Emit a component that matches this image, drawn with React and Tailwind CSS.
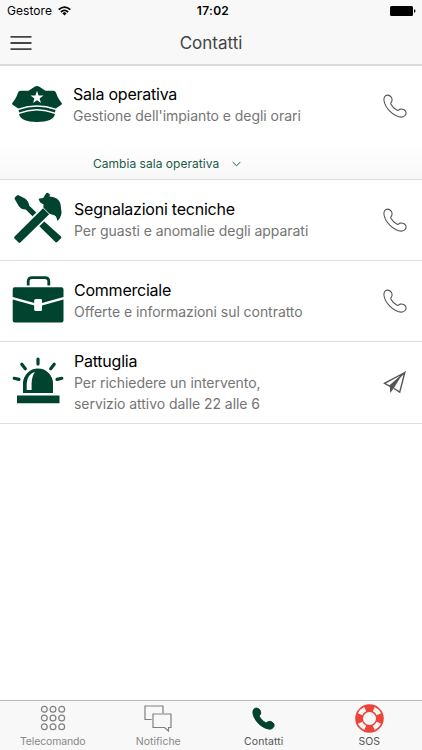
import React from 'react';

const GREEN = '#00432f';

function HatIcon() {
  return (
    <svg width="50" height="36" viewBox="0 0 50 36" fill={GREEN}>
      <path d="M22.600 .7Q25-.6 27.400 .7L33.500 4.700H41.500Q43.200 4.700 43.800 6.200L45.500 10.600Q46.300 12.800 49.300 16.600Q50.600 18 49 19L43.800 22.400Q25 16 6.200 22.400L1 19Q-.6 18 .7 16.600Q3.700 12.800 4.500 10.600L6.200 6.200Q6.800 4.700 8.500 4.700H16.500Z" />
      <path d="M6.600 24Q25 17.400 43.400 24L43 26.400Q25 19.400 7 26.400Z" />
      <path d="M7 28.100Q25 21 43 28.100Q41.500 36 25 36Q8.500 36 7 28.100Z" />
      <path fill="#fff" d="M25 4.800l1.600 4.700h4.900l-3.900 2.900 1.400 4.700-4-2.900-4 2.900 1.400-4.700-3.900-2.900h4.900z" />
    </svg>
  );
}

function ToolsIcon() {
  return (
    <svg width="50" height="52" viewBox="0 0 50 52" fill={GREEN}>
      <path d="M2.400 6.500Q3.500 4 6 3.100L13 6.500Q16.800 9.500 17.100 13.500L24.300 20.600L20.500 24.300L13.800 17.500Q9.500 17.800 6.700 14Z" />
      <path d="M32.300 29.500L49 44.600Q49.800 45.400 49 46.200L45.200 50Q44.300 50.900 43.400 50L27.300 34.300Z" />
      <path d="M31.100 16.300L2.600 44.600Q1.700 45.500 2.500 46.400L6.600 50.500Q7.500 51.300 8.400 50.400L37.200 22.300Z" />
      <path d="M26.700 7.400Q26.700 6.300 28 6.400L31.200 6L34 1.400Q35 .2 36.200 1.100L37.900 2.400L37.500 4.400Q42.500 4.500 45 6.700Q48.600 9.800 48.700 13.500L49.600 20.700Q48.600 26.500 45.300 28.900Q44.800 24.500 42.300 23.200L37.500 21.700L31.300 15.500L31.600 12.400L28.300 10.600Z" />
    </svg>
  );
}

function BriefcaseIcon() {
  return (
    <svg width="52" height="47" viewBox="0 0 52 47" fill={GREEN}>
      <path d="M16.200 9.500V5.600Q16.200 1.600 20.200 1.600H32.800Q36.800 1.600 36.800 5.600V9.500" fill="none" stroke={GREEN} strokeWidth="2.800" />
      <path d="M2.500 11.300H49.500Q51.500 11.300 51.500 13.300V21.100L30 27V24.700Q30 23.300 28.600 23.300H23.800Q22.400 23.300 22.400 24.700V27L.7 21.100V13.300Q.7 11.300 2.500 11.300Z" />
      <path d="M.7 23.600L22.400 29.500V33.500Q22.400 34.900 23.800 34.900H28.600Q30 34.900 30 33.500V29.500L51.500 23.600V44.500Q51.500 46.500 49.500 46.500H2.700Q.7 46.500 .7 44.500Z" />
      <rect x="22.400" y="23.300" width="7.600" height="11.600" rx="1.400" fill="#fff" />
    </svg>
  );
}

function SirenIcon() {
  return (
    <svg width="52" height="47" viewBox="0 0 52 47" fill={GREEN}>
      <path d="M26 2v5M9.800 7.300l3.500 4.400M42.200 7.300l-3.500 4.400M2.200 21.300l4.800 1.100M49.800 21.300L45 22.400" stroke={GREEN} strokeWidth="3.200" strokeLinecap="round" />
      <path d="M11 36V26.500A15 15 0 0 1 41 26.500V36Z" />
      <path d="M14.700 33V26.500Q15 17.500 23 14.700Q20 19 19.600 26V33Z" fill="#fff" />
      <path d="M5 38.500H47.500V46.300H5Z" />
    </svg>
  );
}

const HANDSET =
  'M4.600 1.100C2.200 1 .6 3.300 1 6.500C1.800 13.600 10.500 22.700 18.400 23.100C21.400 23.200 23.700 20.500 22.900 17.900C22.100 16 19.500 14.600 17.300 15.100C16.200 15.400 15.300 16.700 14.100 16.300C11.600 15 9 12.300 7.800 10C7.400 8.800 8.900 8.200 9.100 6.300C9.200 4 7.600 1.200 4.600 1.100Z';

function CallIcon() {
  return (
    <svg width="24" height="24" viewBox="0 0 24 24" fill="none" stroke="#555" strokeWidth="1.100">
      <path d={HANDSET} />
    </svg>
  );
}

function SendIcon() {
  return (
    <svg width="24" height="24" viewBox="0 0 24 24" fill="none" stroke="#555" strokeWidth="1.400">
      <path d="M21.800 1.500L1.500 12.300L6.700 15.200L21.800 1.500L16.700 21.200L11 17.500" />
      <path d="M6.700 14.200L18.500 4.500L11 17L7.300 22Z" fill="#555" stroke="none" />
    </svg>
  );
}

function StatusBar() {
  return (
    <div className="relative flex h-[21px] items-center justify-between pl-[7px] pr-[6px] text-[12px] text-black">
      <div className="flex items-center gap-[6px]">
        <span className="tracking-[0.05px]">Gestore</span>
        <svg width="13" height="10" viewBox="0 0 13 10" fill="none" stroke="#000" strokeWidth="1.700">
          <path d="M.7 3.700Q6.500-1.500 12.300 3.700M2.900 6Q6.500 2.700 10.100 6" />
          <path d="M4.300 7.300Q6.500 5.400 8.700 7.300L6.500 9.600Z" fill="#000" stroke="none" />
        </svg>
      </div>
      <span className="absolute inset-x-0 pl-[4px] text-center font-semibold tracking-[0.3px]">17:02</span>
      <svg width="26" height="10" viewBox="0 0 26 10">
        <rect width="23" height="10" rx="1.500" />
        <path d="M24 3.300Q25.500 3.500 25.500 5T24 6.700Z" />
      </svg>
    </div>
  );
}

function ContactRow({ icon, title, lines, action, className }) {
  return (
    <div className={`flex items-center pl-[12px] pr-[15px] ${className}`}>
      <div className="flex shrink-0 items-center pb-[4px]">{icon}</div>
      <div className="flex-1 whitespace-nowrap pb-[2px]">
        <h2 className="text-[16px] leading-[22px] tracking-[-0.23px] text-black">{title}</h2>
        {lines.map((line) => (
          <p key={line} className="text-[14px] leading-[21px] tracking-[-0.05px] text-[#757575]">{line}</p>
        ))}
      </div>
      {action}
    </div>
  );
}

function Tab({ label, icon, className }) {
  return (
    <div className={`flex flex-1 flex-col items-center text-[10.5px] ${className}`}>
      <div className="flex h-[34px] items-center justify-center">{icon}</div>
      <span className="leading-[13px]">{label}</span>
    </div>
  );
}

export default function App() {
  return (
    <div className="flex h-[750px] w-[422px] flex-col overflow-hidden bg-white font-['Inter','Liberation_Sans',sans-serif]">
      {/* Header */}
      <header className="h-[66px] shrink-0 border-b-2 border-[#dcdcdc] bg-[#f8f8f8]">
        <StatusBar />
        <div className="grid h-[44px] grid-cols-[60px_1fr_60px] items-center">
          <svg className="ml-[10px]" width="22" height="16" viewBox="0 0 22 16" stroke="#444" strokeWidth="1.800">
            <path d="M.5 1.900h21M.5 8h21M.5 14.200h21" />
          </svg>
          <h1 className="pt-[2px] text-center text-[17px] text-[#444]">Contatti</h1>
        </div>
      </header>

      {/* Contacts */}
      <main className="flex-1">
        <section className="h-[114px] border-b border-[#dedede]">
          <ContactRow
            className="h-[79px] gap-[11px]"
            icon={<HatIcon />}
            title="Sala operativa"
            lines={["Gestione dell'impianto e degli orari"]}
            action={<CallIcon />}
          />
          <div className="flex h-[34px] items-center gap-[13px] bg-linear-to-b from-white to-[#f7f7f7] pl-[93px] pt-[3px] text-[12px] tracking-[0.03px] text-[#1d5a49]">
            <span>Cambia sala operativa</span>
            <svg width="9" height="6" viewBox="0 0 9 6" fill="none" stroke="#1d5a49">
              <path d="M.7 1L4.500 4.800L8.300 1" />
            </svg>
          </div>
        </section>
        <ContactRow
          className="h-[81px] gap-[12px] border-b border-[#dedede]"
          icon={<ToolsIcon />}
          title="Segnalazioni tecniche"
          lines={['Per guasti e anomalie degli apparati']}
          action={<CallIcon />}
        />
        <ContactRow
          className="h-[81px] gap-[10px] border-b border-[#dedede]"
          icon={<BriefcaseIcon />}
          title="Commerciale"
          lines={['Offerte e informazioni sul contratto']}
          action={<CallIcon />}
        />
        <ContactRow
          className="h-[82px] gap-[10px] border-b border-[#dedede]"
          icon={<SirenIcon />}
          title="Pattuglia"
          lines={['Per richiedere un intervento,', 'servizio attivo dalle 22 alle 6']}
          action={<SendIcon />}
        />
      </main>

      {/* Tab bar */}
      <nav className="flex h-[50px] shrink-0 border-t border-[#b8b8b8] bg-[#f8f8f8]">
        <Tab
          label="Telecomando"
          className="tracking-[-0.15px] text-[#888]"
          icon={
            <svg width="26" height="26" viewBox="0 0 26 26" fill="none" stroke="#808080" strokeWidth="1.200">
              {[4.3, 13, 21.7].map((y) =>
                [4.3, 13, 21.7].map((x) => <circle key={`${x}-${y}`} cx={x} cy={y} r="2.900" />)
              )}
            </svg>
          }
        />
        <Tab
          label="Notifiche"
          className="text-[#888]"
          icon={
            <svg width="28" height="27" viewBox="0 0 28 27" fill="none" stroke="#808080" strokeWidth="1.200">
              <path d="M7.700 14.500H1V1H19V8.500" />
              <path d="M9 9H27V22.500H24.500V26L20.500 22.500H9Z" />
            </svg>
          }
        />
        <Tab
          label="Contatti"
          className="tracking-[0.1px] text-[#555]"
          icon={
            <svg width="23" height="23" viewBox="0 0 24 24" fill={GREEN} stroke={GREEN}>
              <path d={HANDSET} />
            </svg>
          }
        />
        <Tab
          label="SOS"
          className="text-[#555]"
          icon={
            <svg width="29" height="29" viewBox="0 0 29 29" fill="none">
              <circle cx="14.500" cy="14.500" r="10.400" stroke="#ea4538" strokeWidth="7.800" />
              {/* white segments between the four red bands */}
              <circle
                cx="14.500"
                cy="14.500"
                r="10.300"
                stroke="#f8f8f8"
                strokeWidth="4.800"
                pathLength="80"
                strokeDasharray="9 11"
                strokeDashoffset="-5.500"
              />
            </svg>
          }
        />
      </nav>
    </div>
  );
}
